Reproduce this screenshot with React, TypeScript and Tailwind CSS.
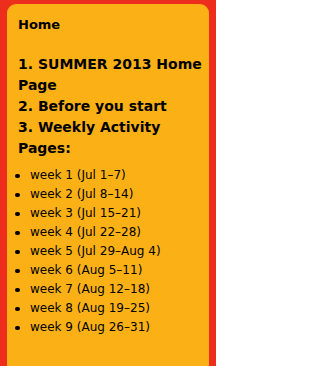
import React from "react";

const weeks = [
  "week 1 (Jul 1–7)",
  "week 2 (Jul 8–14)",
  "week 3 (Jul 15–21)",
  "week 4 (Jul 22–28)",
  "week 5 (Jul 29–Aug 4)",
  "week 6 (Aug 5–11)",
  "week 7 (Aug 12–18)",
  "week 8 (Aug 19–25)",
  "week 9 (Aug 26–31)",
];

export default function App() {
  return (
    <div
      className="w-[216px] h-[366px] overflow-hidden bg-[#ee2e1c] pt-[4px] px-[7px]"
      style={{ fontFamily: '"DejaVu Sans", Verdana, sans-serif' }}
    >
      <div className="h-[400px] rounded-[9px] bg-[#fbb116] pl-[11px] pr-[4px] pt-[12px] text-black">
        <div className="text-[13px] font-bold leading-[18px]">Home</div>
        <div className="mt-[20px] text-[14px] font-bold leading-[21px]">
          <div>1. SUMMER 2013 Home Page</div>
          <div>2. Before you start</div>
          <div>3. Weekly Activity Pages:</div>
        </div>
        <ul className="mt-[7px] text-[12px] leading-[19px]">
          {weeks.map((w) => (
            <li key={w} className="flex items-center">
              <span className="ml-[-3px] mr-[10px] h-[4px] w-[5px] shrink-0 rounded-full bg-black" />
              <span>{w}</span>
            </li>
          ))}
        </ul>
      </div>
    </div>
  );
}
